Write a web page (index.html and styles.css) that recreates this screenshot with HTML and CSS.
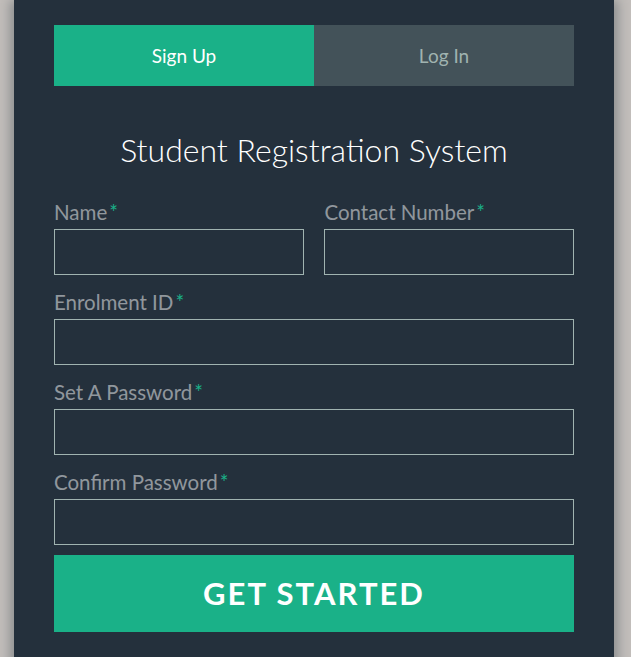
FILE: index.html
```html
<!DOCTYPE html>
<html>
<head>
<meta charset="utf-8">
<link rel="stylesheet" href="styles.css">
</head>
<body>
<div class="form">
  <ul class="tab-group">
    <li class="tab active">Sign Up</li>
    <li class="tab">Log In</li>
  </ul>
  <h1 class="title">Student Registration System</h1>
  <div class="top-row">
    <div class="field">
      <label class="label">Name<span class="req">*</span></label>
      <input class="input" type="text">
    </div>
    <div class="field">
      <label class="label">Contact Number<span class="req">*</span></label>
      <input class="input" type="text">
    </div>
  </div>
  <div class="field">
    <label class="label">Enrolment ID<span class="req">*</span></label>
    <input class="input" type="text">
  </div>
  <div class="field">
    <label class="label">Set A Password<span class="req">*</span></label>
    <input class="input" type="password">
  </div>
  <div class="field">
    <label class="label">Confirm Password<span class="req">*</span></label>
    <input class="input" type="password">
  </div>
  <button class="button">Get Started</button>
</div>
</body>
</html>
```
FILE: styles.css
```css
html, body {
  margin: 0;
  padding: 0;
  background: #c1bdba;
  height: 100%;
  overflow: hidden;
}
body {
  font-family: Lato, "Liberation Sans", sans-serif;
}
.form {
  width: 600px;
  box-sizing: border-box;
  margin: 0 0 0 14px;
  padding: 25px 40px 40px;
  background: #24303c;
  min-height: 700px;
  box-shadow: 0 4px 10px 4px rgba(19, 35, 47, 0.3);
}
.tab-group {
  list-style: none;
  margin: 0;
  padding: 0;
  display: grid;
  grid-template-columns: 1fr 1fr;
}
.tab {
  padding: 15px;
  line-height: 31px;
  font-size: 19px;
  text-align: center;
  background: #435259;
  color: #a0b3b0;
}
.tab.active {
  background: #1ab188;
  color: #fff;
}
.title {
  margin: 44px 0 25px;
  text-align: center;
  color: #fff;
  font-weight: 300;
  font-size: 32px;
  line-height: 40px;
}
.top-row {
  display: grid;
  grid-template-columns: 48% 48%;
  column-gap: 4%;
}
.field {
  margin-bottom: 10px;
}
.label {
  display: block;
  padding-top: 3px;
  margin-bottom: 3px;
  line-height: 28px;
  font-size: 20.5px;
  color: rgba(255, 255, 255, 0.5);
}
.req {
  margin: 2px;
  color: #1ab188;
}
.input {
  display: block;
  box-sizing: border-box;
  width: 100%;
  height: 46px;
  margin: 0;
  padding: 5px 10px;
  background: none;
  border: 1px solid #a0b3b0;
  border-radius: 0;
  color: #fff;
  font-size: 22px;
  outline: none;
}
.button {
  display: block;
  width: 100%;
  margin: 0;
  border: 0;
  border-radius: 0;
  padding: 15px 0;
  line-height: 47px;
  font-family: inherit;
  font-size: 31px;
  font-weight: 700;
  text-transform: uppercase;
  letter-spacing: 2px;
  background: #1ab188;
  color: #fff;
}
```
